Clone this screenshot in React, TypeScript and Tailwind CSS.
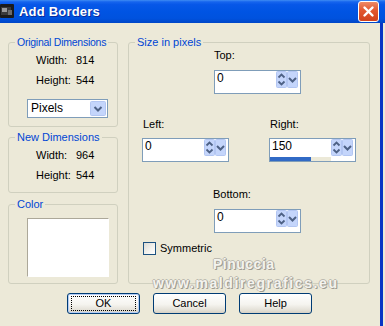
import React from "react";

function GroupBox({
  label,
  className,
  labelClass,
  children,
}: {
  label: string;
  className?: string;
  labelClass?: string;
  children?: React.ReactNode;
}) {
  return (
    <div className={"relative rounded-[3px] border border-[#D0D0BF] " + (className ?? "")}>
      <span
        className={
          "absolute -top-[7px] left-[6px] bg-[#ECE9D8] px-[2px] leading-[13px] text-[#0046D5] whitespace-nowrap " +
          (labelClass ?? "text-[11px]")
        }
      >
        {label}
      </span>
      {children}
    </div>
  );
}

function SpinArrows() {
  return (
    <svg width="11" height="17" viewBox="0 0 11 17">
      <rect x="0.5" y="0.5" width="10" height="16" rx="1" fill="#C4D5FB" stroke="#B3C6F2" />
      <polyline points="2.5,6.5 5.5,3.5 8.5,6.5" fill="none" stroke="#4D6185" strokeWidth="1.8" />
      <polyline points="2.5,10.5 5.5,13.5 8.5,10.5" fill="none" stroke="#4D6185" strokeWidth="1.8" />
    </svg>
  );
}

function DropArrow({ h = 17, w = 11 }: { h?: number; w?: number }) {
  const cx = w / 2;
  const cy = h / 2;
  return (
    <svg width={w} height={h} viewBox={`0 0 ${w} ${h}`}>
      <rect x="0.5" y="0.5" width={w - 1} height={h - 1} rx="1" fill="#C4D5FB" stroke="#B3C6F2" />
      <polyline
        points={`${cx - 3.5},${cy - 1.5} ${cx},${cy + 2} ${cx + 3.5},${cy - 1.5}`}
        fill="none"
        stroke="#4D6185"
        strokeWidth="2"
      />
    </svg>
  );
}

function SpinBox({ value, fill }: { value: string; fill?: number }) {
  return (
    <div className="flex h-[24px] w-[87px] border border-[#7F9DB9] bg-white">
      <div className="flex flex-1 flex-col">
        <div className="h-[17px] pl-[2px] text-[12px] leading-[15px] text-black">{value}</div>
        {fill !== undefined ? (
          <div className="mt-[1px] h-[4px] bg-[#ECE9D8]">
            <div className="h-full bg-[#316AC5]" style={{ width: `${fill}%` }} />
          </div>
        ) : null}
      </div>
      <div className="flex h-[17px] pr-[2px]">
        <SpinArrows />
        <DropArrow />
      </div>
    </div>
  );
}

function XPButton({ label, focused }: { label: string; focused?: boolean }) {
  return (
    <div
      className={
        "flex h-[21px] w-[73px] items-center justify-center rounded-[3px] border border-[#003C74] bg-[linear-gradient(to_bottom,#FFFFFF_0%,#F5F4EF_55%,#E3E0D6_85%,#D6D0C5_100%)] " +
        (focused ? "shadow-[inset_0_0_0_1px_#B4CCF5]" : "")
      }
    >
      <div
        className={
          "flex h-[15px] w-[65px] items-center justify-center text-[11px] leading-[13px] text-black " +
          (focused ? "border border-dotted border-black" : "")
        }
      >
        {label}
      </div>
    </div>
  );
}

export default function App() {
  return (
    <div className="relative h-[326px] w-[385px] overflow-hidden bg-[#ECE9D8] font-['Liberation_Sans',Arial,sans-serif] text-[11px] leading-[13px] text-black">
      {/* Title bar */}
      <div className="flex h-[23px] items-center bg-[linear-gradient(to_bottom,#3F8CF3_0%,#1665EE_8%,#0757E8_20%,#0054E3_50%,#0052DE_80%,#0046C7_100%)]">
        <svg width="14" height="14" viewBox="0 0 14 14" className="mb-[1px]">
          <rect x="0" y="0" width="14" height="14" rx="1" fill="#1B1B1B" />
          <rect x="1" y="3" width="10" height="8" fill="#3A3A3A" />
          <rect x="2" y="4" width="5" height="4" fill="#9A9A9A" />
          <rect x="8" y="6" width="4" height="5" fill="#6B6B6B" />
        </svg>
        <span className="ml-[5px] text-[13px] font-bold leading-[16px] tracking-[0.2px] text-white [text-shadow:1px_1px_0_#0B2B9C]">
          Add Borders
        </span>
        <div className="ml-auto mr-[6px] flex h-[21px] w-[21px] items-center justify-center rounded-[3px] border border-white bg-[linear-gradient(to_bottom,#EE8A66_0%,#E2572F_45%,#D1421C_100%)]">
          <svg width="13" height="13" viewBox="0 0 13 13">
            <line x1="2.5" y1="2.5" x2="10.5" y2="10.5" stroke="white" strokeWidth="2.4" strokeLinecap="round" />
            <line x1="10.5" y1="2.5" x2="2.5" y2="10.5" stroke="white" strokeWidth="2.4" strokeLinecap="round" />
          </svg>
        </div>
      </div>

      <div className="flex">
        <div className="flex-1 pl-[8px] pt-[19px]">
          <div className="flex gap-[10px]">
            {/* Left column */}
            <div className="flex w-[110px] flex-col">
              <GroupBox
                label="Original Dimensions"
                labelClass="text-[10.5px] tracking-[-0.25px]"
                className="h-[85px] pl-[18px] pt-[11px]"
              >
                <div className="flex flex-col gap-[7px] pl-[9px]">
                  <div className="flex">
                    <span className="w-[40px]">Width:</span>
                    <span>814</span>
                  </div>
                  <div className="flex">
                    <span className="w-[40px]">Height:</span>
                    <span>544</span>
                  </div>
                </div>
                <div className="mt-[12px] flex h-[19px] w-[81px] items-center border border-[#7F9DB9] bg-white pl-[3px]">
                  <span className="flex-1 text-[12px] leading-[15px]">Pixels</span>
                  <div className="mr-[1px] flex">
                    <DropArrow h={15} w={16} />
                  </div>
                </div>
              </GroupBox>

              <GroupBox label="New Dimensions" className="mt-[10px] h-[56px] pl-[27px] pt-[11px]">
                <div className="flex flex-col gap-[7px]">
                  <div className="flex">
                    <span className="w-[40px]">Width:</span>
                    <span>964</span>
                  </div>
                  <div className="flex">
                    <span className="w-[40px]">Height:</span>
                    <span>544</span>
                  </div>
                </div>
              </GroupBox>

              <GroupBox label="Color" className="mt-[11px] h-[80px] pl-[18px] pt-[13px]">
                <div className="h-[59px] w-[82px] border-b border-l border-r border-t border-[#ACA899] border-b-white border-r-white bg-white" />
              </GroupBox>
            </div>

            {/* Size in pixels */}
            <GroupBox label="Size in pixels" className="h-[242px] w-[242px] pl-[13px] pt-[6px]">
              <div className="ml-[72px] flex flex-col">
                <span>Top:</span>
                <div className="mt-[8px]">
                  <SpinBox value="0" />
                </div>
              </div>

              <div className="mt-[24px] flex gap-[40px]">
                <div className="flex flex-col">
                  <span className="pl-[1px]">Left:</span>
                  <div className="mt-[7px]">
                    <SpinBox value="0" />
                  </div>
                </div>
                <div className="flex flex-col">
                  <span className="pl-[1px]">Right:</span>
                  <div className="mt-[7px]">
                    <SpinBox value="150" fill={68} />
                  </div>
                </div>
              </div>

              <div className="ml-[71px] mt-[26px] flex flex-col">
                <span>Bottom:</span>
                <div className="ml-[1px] mt-[8px]">
                  <SpinBox value="0" />
                </div>
              </div>

              <div className="mt-[9px] flex items-center gap-[4px] pl-[1px]">
                <div className="h-[13px] w-[13px] border border-[#1C5180] bg-[linear-gradient(135deg,#DCDBD5_0%,#F4F3EF_60%,#FFFFFF_100%)]" />
                <span>Symmetric</span>
              </div>
            </GroupBox>
          </div>

          <div className="mt-[9px] flex gap-[13px] pl-[59px]">
            <XPButton label="OK" focused />
            <XPButton label="Cancel" />
            <XPButton label="Help" />
          </div>
        </div>
        <div className="mr-[2px] h-[303px] w-[3px] bg-[#0A34C4]" />
      </div>

      {/* watermark */}
      <span className="absolute left-[213px] top-[256px] text-[14px] font-bold leading-[16px] tracking-[0.5px] text-[#F4F3EE] [text-shadow:1px_1px_0_#9E9C92,-1px_0_0_#BDBBB1,0_-1px_0_#BDBBB1,1px_0_0_#B0AEA4]">
        Pinuccia
      </span>
      <span className="absolute left-[153px] top-[275px] text-[14px] font-bold leading-[16px] tracking-[1.6px] text-[#F4F3EE] [text-shadow:1px_1px_0_#9E9C92,-1px_0_0_#BDBBB1,0_-1px_0_#BDBBB1,1px_0_0_#B0AEA4]">
        www.maldiregrafics.eu
      </span>
    </div>
  );
}
